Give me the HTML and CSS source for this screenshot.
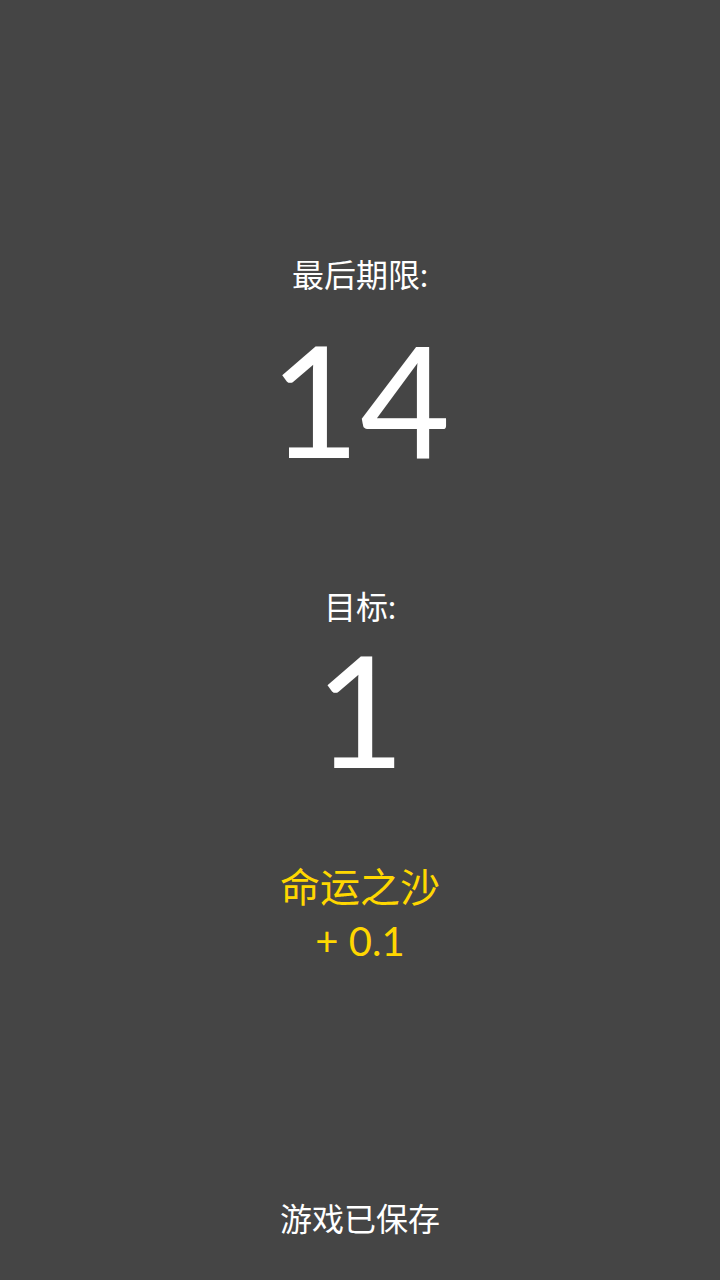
FILE: index.html
```html
<!DOCTYPE html>
<html lang="zh-CN">
<head>
<meta charset="utf-8">
<title>最后期限</title>
<link rel="stylesheet" href="styles.css">
</head>
<body>
<main class="screen">
  <section class="block deadline">
    <div class="label">最后期限:</div>
    <div class="big">14</div>
  </section>
  <section class="block goal">
    <div class="label">目标:</div>
    <div class="big">1</div>
  </section>
  <section class="block bonus">
    <div class="bonus-line">命运之沙</div>
    <div class="bonus-line">+ 0.1</div>
  </section>
  <footer class="saved">游戏已保存</footer>
</main>
</body>
</html>
```

FILE: styles.css
```css
html, body {
  margin: 0;
  padding: 0;
  background: #454545;
}
body {
  font-family: Lato, "Noto Sans CJK SC", sans-serif;
  color: #ffffff;
}
.screen {
  height: 1280px;
  display: flex;
  flex-direction: column;
  align-items: center;
  box-sizing: border-box;
  padding-top: 255px;
  padding-bottom: 41px;
}
.block {
  display: flex;
  flex-direction: column;
  align-items: center;
}
.label {
  font-size: 32px;
  line-height: 40px;
}
.big {
  font-size: 156px;
  line-height: 160px;
  font-weight: 400;
}
.deadline .big {
  margin-top: 23px;
}
.goal {
  margin-top: 109px;
}
.goal .big {
  margin-top: 1px;
}
.bonus {
  margin-top: 72px;
  color: #ffd700;
}
.bonus-line {
  font-size: 40px;
  line-height: 54px;
}
.saved {
  margin-top: auto;
  font-size: 32px;
  line-height: 40px;
}
```
